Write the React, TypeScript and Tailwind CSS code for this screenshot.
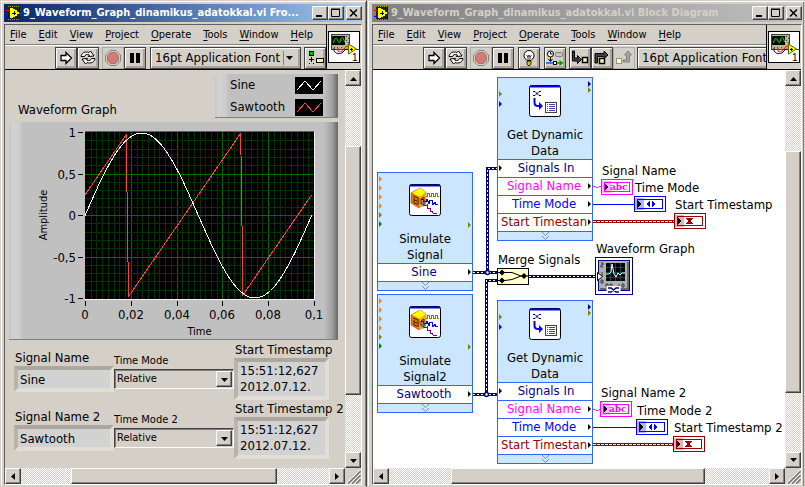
import React from 'react';
import clsx from 'clsx';

type PortColor = 'black' | 'navy' | 'blue' | 'olive' | 'orange' | 'green';

interface PortSpec {
  x: number;
  y: number;
  color: PortColor;
}

interface NodeRow {
  label: string;
  className: string;
}

const PORT_FILL: Record<PortColor, string> = {
  black: '#000000',
  navy: '#000080',
  blue: '#0000ff',
  olive: '#808000',
  orange: '#ff8000',
  green: '#008000',
};

const MENUS = ['File', 'Edit', 'View', 'Project', 'Operate', 'Tools', 'Window', 'Help'];

const RAISED = 'border border-t-white border-l-white border-b-[#404040] border-r-[#404040] bg-[#d4d0c8] shadow-[inset_-1px_-1px_0_#808080]';
const TRACK = 'bg-[repeating-conic-gradient(#ffffff_0_25%,#d4d0c8_0_50%)] bg-size-[2px_2px]';

/* ---------- icons ---------- */

function LabViewIcon() {
  return (
    <svg width="16" height="14" viewBox="0 0 16 14" shapeRendering="crispEdges" aria-hidden="true" className="shrink-0">
      <rect x="2" y="0" width="12" height="14" fill="#202010" />
      <path d="M2 .5h12M2 13.500h12" stroke="#a0a000" strokeDasharray="1 1" />
      <path d="M4 2h3v1h2v1h2v2h2v2h-2v2H9v1H7v1H4z" fill="#ffff00" />
      <path d="M6 7.500h4M8.500 5v4" stroke="#000" />
      <path d="M0 4.500h4M13 7.500h3" stroke="#ff0000" />
      <path d="M0 10.500h4" stroke="#0000ff" />
    </svg>
  );
}

function ViIcon() {
  return (
    <svg width="32" height="32" viewBox="0 0 32 32" aria-hidden="true">
      <rect x="0.5" y="0.5" width="31" height="31" fill="#fff" stroke="#000" />
      <g shapeRendering="crispEdges">
        <rect x="3.500" y="3.500" width="18" height="15" fill="#b8b890" stroke="#404030" />
        <rect x="4" y="5" width="13" height="9" fill="#000" />
        <path d="M18 5h1v1h-1zM20 7h1v1h-1zM18 9h1v1h-1zM20 11h1v1h-1zM6 16h1v1h-1zM9 16h1v1h-1zM13 16h1v1h-1z" fill="#404040" />
      </g>
      <path d="M6 17v3c3 4 8 3 10 0s3-1 5-1" fill="none" stroke="#000080" />
      <path d="M10 17v3c2 2 5 0 6-2s3-3 5-3" fill="none" stroke="#ff0000" />
      <path d="M5.500 12c1-5 3-6 4-3s2 4 3 0 3-3 4 2" fill="none" stroke="#00ff00" />
      <path d="M20.500 13v10l8-5z" fill="#ffff00" stroke="#606000" />
      <g shapeRendering="crispEdges">
        <path d="M22 18.500h3M23.500 17v3" stroke="#000" />
        <path d="M28 18.500h3" stroke="#ff0000" />
      </g>
      <text x="24" y="30" fontSize="10" fontFamily="Liberation Sans" fill="#000">1</text>
    </svg>
  );
}

function RunIcon() {
  return (
    <svg width="14" height="14" viewBox="0 0 14 14" aria-hidden="true">
      <path d="M2 4.500h5v-3l5.500 5.500-5.500 5.500v-3h-5z" fill="#fff" stroke="#000" strokeWidth="1.300" />
    </svg>
  );
}

function RunContinuousIcon() {
  return (
    <svg width="16" height="15" viewBox="0 0 16 15" aria-hidden="true" fill="#fff" stroke="#000">
      <path d="M1 6.500C1.500 3 5 1 9 2.500L10.500 1l3.500 5-5.500.500 1-1.500C7 4 5 4.500 4.500 6.500z" />
      <path d="M15 8.500c-.500 3.500-4 5.500-8 4L5.500 14 2 9l5.500-.500-1 1.500c2.500 1 4.500.500 5-1.500z" />
    </svg>
  );
}

function AbortIcon() {
  return (
    <svg width="16" height="16" viewBox="0 0 16 16" aria-hidden="true">
      <path d="M5 .5h6L15.500 5v6L11 15.500H5L.5 11V5z" fill="#d4d0c8" stroke="#808080" />
      <path d="M5.500 2.500h5l3 3v5l-3 3h-5l-3-3v-5z" fill="#d87870" stroke="#808080" />
    </svg>
  );
}

function PauseIcon() {
  return (
    <svg width="12" height="12" viewBox="0 0 12 12" aria-hidden="true">
      <path d="M1 1h4v10H1zM7 1h4v10H7z" />
    </svg>
  );
}

function BulbIcon() {
  return (
    <svg width="14" height="16" viewBox="0 0 14 16" aria-hidden="true">
      <path d="M5 10.500C3 8.500 2 7.500 2 5.500a5 5 0 0 1 10 0c0 2-1 3-3 5z" fill="#fff" stroke="#000" />
      <path d="M4.500 5l1.500 2 1-2 1 2 1.500-2M6 7v4M8 7v4" fill="none" stroke="#000" strokeWidth=".8" />
      <path d="M5 11h4v3l-1 1.500H6L5 14z" fill="#e0c000" stroke="#000" strokeWidth=".8" />
    </svg>
  );
}

function RetainIcon() {
  return (
    <svg width="18" height="16" viewBox="0 0 18 16" aria-hidden="true">
      <circle cx="4.500" cy="4" r="3" fill="#fff" stroke="#000" />
      <path d="M4.500 2v2h2" fill="none" stroke="#000" />
      <rect x="9.500" y="2.500" width="7" height="4" rx="1" fill="#c8c4bc" stroke="#808080" />
      <path d="M4.500 7v4M2.500 9l2 2.500 2-2.500" fill="none" stroke="#000" />
      <path d="M0 13h8" stroke="#0060ff" strokeWidth="1.500" />
      <rect x="7.500" y="11.500" width="3" height="3" fill="#fff" stroke="#000" />
      <path d="M11 13h3" stroke="#00a000" strokeWidth="1.500" />
      <path d="M13.500 10v6l4-3z" fill="#00a000" />
    </svg>
  );
}

function StepIntoIcon() {
  return (
    <svg width="18" height="16" viewBox="0 0 18 16" aria-hidden="true">
      <path d="M1.500 1h2v7h3V5.500l4 4-4 4V11h-5z" fill="#404040" stroke="#000" />
      <rect x="11.500" y="7.500" width="5" height="5" fill="#ffffa0" stroke="#000" strokeWidth="1.500" />
    </svg>
  );
}

function StepOverIcon() {
  return (
    <svg width="18" height="16" viewBox="0 0 18 16" aria-hidden="true">
      <path d="M2 13V3.500h9V1l4 4-4 4V6.500H4.500V13z" fill="#404040" stroke="#000" />
      <rect x="6.500" y="8.500" width="5" height="5" fill="#ffffa0" stroke="#000" strokeWidth="1.500" />
    </svg>
  );
}

function StepOutIcon() {
  return (
    <svg width="18" height="16" viewBox="0 0 18 16" aria-hidden="true">
      <path d="M8 12V10h3.500V5H9.500l3.500-4 3.500 4H14.500v7z" fill="#a8a49c" stroke="#808080" />
      <rect x="1.500" y="8.500" width="5" height="5" fill="#ffffc8" stroke="#909090" />
    </svg>
  );
}

function AlignIcon() {
  return (
    <svg width="18" height="16" viewBox="0 0 18 16" shapeRendering="crispEdges" aria-hidden="true">
      <rect x="3.500" y="1.500" width="4" height="4" fill="#00c000" stroke="#000" />
      <path d="M3 9.500h5M5.500 7v5M3 13.500h1M7 13.500h1" stroke="#000" />
      <rect x="10.500" y="8.500" width="7" height="4" fill="#ffff80" stroke="#000" />
    </svg>
  );
}

function Arrow({ dir }: { dir: 'up' | 'down' | 'left' | 'right' }) {
  const paths = {
    up: 'M0 6h7L3.500 2z',
    down: 'M0 2h7L3.500 6z',
    left: 'M5 0v7L1 3.500z',
    right: 'M2 0v7L6 3.500z',
  };
  return (
    <svg width="7" height="7" viewBox="0 0 7 7" aria-hidden="true">
      <path d={paths[dir]} />
    </svg>
  );
}

function SimulateIcon() {
  return (
    <svg width="32" height="32" viewBox="0 0 32 32" aria-hidden="true">
      <rect x=".5" y=".5" width="31" height="31" rx="2" fill="#fff" stroke="#000" />
      <path d="M1 1.500h30" stroke="#0000c0" strokeWidth="2" />
      <path d="M2 9l9-5 6 4v11l-7 5-8-5z" fill="#e87800" stroke="#804000" strokeWidth=".5" />
      <path d="M3 9l8-5 6 4-6 5z" fill="#ffff00" />
      <path d="M11 13l6-5v11l-7 5z" fill="#f8a030" />
      <path d="M4 12l5 2v7M5 14v5l3 1M5 16l3 1M12 15l3-2v5l-3 2z" fill="none" stroke="#402000" />
      <path d="M12 18l4-1 1 3-3 3z" fill="#707070" />
      <g shapeRendering="crispEdges" fill="none">
        <path d="M17 12.500h1.500V9.500h2v3h2v-3h2v3h2v-3h2v3h1.500" stroke="#808000" />
        <path d="M12 15.500h2l1 2h2l1-2 2 4 1-3h2l1 4 2-2 1 2h2" stroke="#0000ff" />
        <path d="M14 20l2 2 2-1v3h3v3h2l1 2h4" stroke="#800080" />
      </g>
    </svg>
  );
}

function DynamicDataIcon() {
  return (
    <svg width="32" height="32" viewBox="0 0 32 32" aria-hidden="true">
      <rect x=".5" y=".5" width="31" height="31" rx="2" fill="#fff" stroke="#000" />
      <path d="M1 1.500h30" stroke="#0000e0" strokeWidth="2" />
      <path d="M4 6.500h2l4 4h2M4 10.500h2l4-4h2" fill="none" stroke="#000060" />
      <path d="M5.500 13v4.500q0 3.500 3.500 3.500h2" fill="none" stroke="#0000ff" strokeWidth="2" />
      <path d="M10 17v8l4-4z" fill="#0000ff" />
      <rect x="16.500" y="17.500" width="11" height="10" fill="#fff" stroke="#404040" />
      <path d="M18 19.500h1M20 19.500h6M18 21.500h1M20 21.500h6M18 23.500h1M20 23.500h6M18 25.500h1M20 25.500h6" stroke="#4040c0" />
    </svg>
  );
}

function GraphTerminalIcon() {
  return (
    <svg width="38" height="38" viewBox="0 0 38 38" aria-hidden="true">
      <rect x=".5" y=".5" width="37" height="37" fill="#fff" stroke="#000080" />
      <rect x="3.500" y="3.500" width="31" height="30" fill="#b0b0b0" stroke="#000080" />
      <path d="M33 5v27H5" fill="none" stroke="#686868" strokeWidth="2" />
      <rect x="11" y="6" width="19" height="18" fill="#000" />
      <path d="M15.500 6v18M20.500 6v18M25.500 6v18M11 10.500h19M11 15.500h19M11 20.500h19" stroke="#007070" strokeWidth=".7" />
      <path d="M11 17h3l2-2 1-8 2 10 2 3 2-4 2 2 2-2h3" fill="none" stroke="#fff" />
      <path d="M6 6h2v2H6v2h2M7 15v4M6 23h2v3H6zM11 27h2v3h-2zM15 27h2v3h-2zM24 27v3M27 27h2v3h-2z" fill="none" stroke="#202020" strokeWidth=".8" />
      <path d="M2.500 15.500v8l5-4z" fill="#fff" stroke="#000" />
      <rect x="11.500" y="29" width="14" height="8" fill="#fff" />
      <path d="M13 31h3l5 4h3M13 35h3l5-4h3" fill="none" stroke="#000080" strokeWidth="1.500" />
    </svg>
  );
}

/* ---------- window chrome ---------- */

function ToolButton({ label, disabled, children }: { label: string; disabled?: boolean; children: React.ReactNode }) {
  return (
    <button
      type="button"
      aria-label={label}
      disabled={disabled}
      className={clsx(
        'flex h-[22px] w-[22px] shrink-0 items-center justify-center border',
        disabled
          ? 'border-[#b0aca4]'
          : 'border-[#404040] shadow-[inset_1px_1px_0_#ffffff,inset_-2px_-2px_0_#a8a49c]',
      )}
    >
      {children}
    </button>
  );
}

function FontSelect() {
  return (
    <div className="relative h-[22px] w-[151px] shrink-0">
      <select
        aria-label="Text settings"
        className="h-full w-full appearance-none border border-[#404040] bg-[#d4d0c8] pl-1 text-[13px] leading-4 shadow-[inset_1px_1px_0_#ffffff,inset_-2px_-2px_0_#a8a49c]"
      >
        <option>16pt Application Font</option>
      </select>
      <span className="pointer-events-none absolute top-1 right-2 flex h-[14px] items-center border-l border-[#808080] pl-[2px]">
        <Arrow dir="down" />
      </span>
    </div>
  );
}

function CaptionButton({ kind }: { kind: 'Minimize' | 'Maximize' | 'Close' }) {
  return (
    <button type="button" aria-label={kind} className={clsx('flex h-[14px] w-4 items-center justify-center', RAISED)}>
      <svg width="12" height="10" viewBox="0 0 12 10" fill="none" stroke="#000" aria-hidden="true">
        {kind === 'Minimize' && <path d="M2 8h6" strokeWidth="2" />}
        {kind === 'Maximize' && <path d="M1.500 1.500h8v7h-8zM1 1h9" />}
        {kind === 'Close' && <path d="M2 1.500l7 7M9 1.500l-7 7" strokeWidth="1.500" />}
      </svg>
    </button>
  );
}

interface WindowProps {
  className: string;
  title: string;
  active?: boolean;
  tools: React.ReactNode;
  vThumb: React.ReactNode;
  hThumb: React.ReactNode;
  children: React.ReactNode;
}

function Window({ className, title, active, tools, vThumb, hThumb, children }: WindowProps) {
  return (
    <section
      className={clsx(
        'flex min-w-0 flex-col border border-t-[#d4d0c8] border-b-[#d4d0c8] border-l-[#d4d0c8] bg-[#d4d0c8] pt-[2px] pb-px shadow-[inset_1px_1px_0_#ffffff,inset_-1px_0_0_#808080]',
        className,
      )}
    >
      <header
        className={clsx(
          'mt-px mb-[2px] flex h-[18px] items-center pl-[2px]',
          active
            ? 'bg-linear-to-r from-[#0a246a] to-[#a6caf0] text-white'
            : 'bg-linear-to-r from-[#808080] to-[#c0c0c0] text-[#d4d0c8]',
        )}
      >
        <LabViewIcon />
        <h1 className="min-w-0 flex-1 pl-px text-[11px] leading-4 font-bold whitespace-nowrap">{title}</h1>
        <div className="flex shrink-0">
          <CaptionButton kind="Minimize" />
          <CaptionButton kind="Maximize" />
          <span className="w-[2px]" />
          <CaptionButton kind="Close" />
        </div>
      </header>

      <div className="flex min-h-0 flex-1 flex-col border border-t-[#606060] border-r-white border-b-white border-l-[#606060]">
        <div className="flex h-[45px] shrink-0 border-b border-black">
          <div className="min-w-0 flex-1 overflow-hidden">
            <nav className="flex h-5 items-center gap-3 border-b border-[#808080] pl-[5px] text-[11px] leading-4">
              {MENUS.map((menu) => (
                <button key={menu} type="button">
                  <span className="underline underline-offset-2">{menu[0]}</span>
                  {menu.slice(1)}
                </button>
              ))}
            </nav>
            <div className="flex h-6 items-center border-t border-white pl-[50px]">{tools}</div>
          </div>
          <div className="flex w-[35px] shrink-0 items-center border-l border-black pl-px">
            <ViIcon />
          </div>
        </div>

        <div className="flex min-h-0 flex-1">
          <div className="min-w-0 flex-1">{children}</div>
          <div className={clsx('flex w-4 shrink-0 flex-col', TRACK)}>
            <button type="button" aria-label="Scroll up" className={clsx('flex h-4 shrink-0 items-center justify-center', RAISED)}>
              <Arrow dir="up" />
            </button>
            {vThumb}
            <button type="button" aria-label="Scroll down" className={clsx('flex h-4 shrink-0 items-center justify-center', RAISED)}>
              <Arrow dir="down" />
            </button>
          </div>
        </div>

        <div className="flex h-4 shrink-0">
          <div className={clsx('flex min-w-0 flex-1', TRACK)}>
            <button type="button" aria-label="Scroll left" className={clsx('flex w-4 shrink-0 items-center justify-center', RAISED)}>
              <Arrow dir="left" />
            </button>
            {hThumb}
            <button type="button" aria-label="Scroll right" className={clsx('flex w-4 shrink-0 items-center justify-center', RAISED)}>
              <Arrow dir="right" />
            </button>
          </div>
          <svg width="16" height="16" viewBox="0 0 16 16" className="shrink-0" aria-hidden="true">
            <path d="M3 15.500L15.500 3M7 15.500L15.500 7M11 15.500l4.500-4.500" stroke="#808080" strokeWidth="2" />
            <path d="M1.500 15.500l14-14M5.500 15.500l10-10M9.500 15.500l6-6" stroke="#fff" />
          </svg>
        </div>
      </div>
    </section>
  );
}

function RunTools() {
  return (
    <>
      <ToolButton label="Run"><RunIcon /></ToolButton>
      <ToolButton label="Run continuously"><RunContinuousIcon /></ToolButton>
      <span className="w-[3px] shrink-0" />
      <ToolButton label="Abort" disabled><AbortIcon /></ToolButton>
      <ToolButton label="Pause"><PauseIcon /></ToolButton>
    </>
  );
}

/* ---------- front panel ---------- */

const PANEL_FILL =
  'bg-[linear-gradient(to_right,#c8c8c8_0,#d2d2d2_4px,#cecece_10px,#c0c0c0_14px,#c0c0c0_calc(100%-14px),#a0a0a0_calc(100%-6px),#686868_100%)] border-b border-[#808080]';

const PLOT = { x: 76, y: 10, w: 229, h: 167 };
const X_TICKS = ['0', '0,02', '0,04', '0,06', '0,08', '0,1'];
const Y_TICKS = ['1', '0,5', '0', '-0,5', '-1'];

function toPoints(fn: (n: number) => number) {
  return Array.from({ length: 100 }, (_, n) => {
    const px = PLOT.x + (n / 100) * PLOT.w;
    const py = PLOT.y + PLOT.h / 2 - fn(n) * (PLOT.h / 2 - 1);
    return `${px.toFixed(1)},${py.toFixed(1)}`;
  }).join(' ');
}

const SINE = toPoints((n) => Math.sin((2 * Math.PI * n) / 99));
const SAWTOOTH = toPoints((n) => ((0.625 + (2 * n) / 99) % 1) * 2 - 1);

function WaveformGraph() {
  const { x, y, w, h } = PLOT;
  return (
    <svg width="329" height="217" viewBox="0 0 329 217" role="img" aria-label="Waveform Graph">
      <rect x={x} y={y} width={w} height={h} fill="#000" />
      <g shapeRendering="crispEdges">
        {Array.from({ length: 39 }, (_, i) => i + 1).map((i) => {
          const gx = Math.round(x + (i * w) / 40) + 0.5;
          return <path key={i} d={`M${gx} ${y}v${h}`} stroke={i % 8 === 0 ? '#006c00' : '#003400'} />;
        })}
        {Array.from({ length: 19 }, (_, i) => i + 1).map((i) => {
          const gy = Math.round(y + (i * (h - 1)) / 20) + 0.5;
          return <path key={i} d={`M${x} ${gy}h${w}`} stroke={i % 5 === 0 ? '#006c00' : '#003400'} />;
        })}
        <path d={`M${x} ${y - 0.5}h${w}`} stroke="#606060" />
        <path d={`M${x} ${y + h + 0.5}h${w + 0.5}V${y}`} fill="none" stroke="#f0f0f0" />
        <polyline points={SAWTOOTH} fill="none" stroke="#ff4040" />
        <polyline points={SINE} fill="none" stroke="#fff" />
      </g>
      <g fontSize="13" fill="#000">
        {Y_TICKS.map((t, i) => {
          const ty = Math.round(y + (i * (h - 1)) / 4);
          return (
            <g key={t}>
              <path d={`M${x - 7} ${ty + 0.5}h5`} stroke="#000" />
              <text x={x - 9} y={ty + 5} textAnchor="end">{t}</text>
            </g>
          );
        })}
        {X_TICKS.map((t, i) => {
          const tx = Math.round(x + (i * w) / 5);
          return (
            <g key={t}>
              <path d={`M${tx + 0.5} ${y + h + 2}v5`} stroke="#000" />
              <text x={tx} y={y + h + 20} textAnchor="middle">{t}</text>
            </g>
          );
        })}
      </g>
      <text x={x + w / 2} y="213" fontSize="11" textAnchor="middle">Time</text>
      <text transform="translate(38 93) rotate(-90)" fontSize="11" textAnchor="middle">Amplitude</text>
    </svg>
  );
}

function LegendItem({ label, color }: { label: string; color: string }) {
  return (
    <li className="flex h-[22px] items-center justify-between pr-[15px] pl-[15px]">
      {label}
      <svg width="28" height="17" viewBox="0 0 28 17" shapeRendering="crispEdges" aria-hidden="true">
        <rect width="28" height="17" fill="#000" />
        <path d="M2 13l8-9 8 9 8-9" fill="none" stroke={color} />
      </svg>
    </li>
  );
}

interface SignalControlsProps {
  suffix: string;
  name: string;
}

const SUNKEN =
  'border-4 border-t-[#aca8a0] border-l-[#b8b4ac] border-r-[#e2ded6] border-b-[#e2ded6] bg-[#d2d2d2]';

function SignalControls({ suffix, name }: SignalControlsProps) {
  const nameId = `signal-name${suffix.trim()}`;
  const modeId = `time-mode${suffix.trim()}`;
  return (
    <div className="mb-px flex items-center">
      <div className="flex w-[100px] flex-col">
        <label htmlFor={nameId} className="pl-px leading-4 whitespace-nowrap">{`Signal Name${suffix}`}</label>
        <input id={nameId} defaultValue={name} readOnly className={clsx('h-[26px] w-full pl-[2px] leading-4', SUNKEN)} />
      </div>
      <div className="flex w-[120px] flex-col text-[11px]">
        <label htmlFor={modeId} className="leading-4">{`Time Mode${suffix}`}</label>
        <div className="relative h-5">
          <select
            id={modeId}
            className="h-5 w-full appearance-none border border-t-[#404040] border-r-white border-b-white border-l-[#404040] bg-[#d4d0c8] pl-[2px] leading-4 shadow-[inset_1px_1px_0_#808080]"
          >
            <option>Relative</option>
            <option>Absolute</option>
          </select>
          <span className={clsx('pointer-events-none absolute top-[2px] right-[2px] flex h-4 w-4 items-center justify-center', RAISED)}>
            <Arrow dir="down" />
          </span>
        </div>
      </div>
      <div className="flex flex-col">
        <h2 className="pl-px leading-4 whitespace-nowrap">{`Start Timestamp${suffix}`}</h2>
        <div className={clsx('h-[42px] w-[95px] pt-px pl-[2px] leading-4', SUNKEN)}>
          15:51:12,627
          <br />
          2012.07.12.
        </div>
      </div>
    </div>
  );
}

function FrontPanel() {
  return (
    <div className="flex w-[340px] flex-col pt-1 pl-1">
      <div className="flex items-end justify-between pr-[7px]">
        <h2 className="pl-[9px] leading-4">Waveform Graph</h2>
        <ul className={clsx('h-[44px] w-[123px]', PANEL_FILL)}>
          <LegendItem label="Sine" color="#ffffff" />
          <LegendItem label="Sawtooth" color="#ff4040" />
        </ul>
      </div>
      <div className={clsx('mt-1 mb-[2px] w-[329px]', PANEL_FILL)}>
        <WaveformGraph />
      </div>
      <div className="pl-[5px]">
        <SignalControls suffix="" name="Sine" />
        <SignalControls suffix=" 2" name="Sawtooth" />
      </div>
    </div>
  );
}

/* ---------- block diagram ---------- */

function Ports({ ports, height }: { ports: PortSpec[]; height: number }) {
  return (
    <svg width="94" height={height} className="absolute top-0 left-0" aria-hidden="true">
      {ports.map((p) => (
        <path key={`${p.x}-${p.y}`} d={`M${p.x} ${p.y - 3}v6l3-3z`} fill={PORT_FILL[p.color]} />
      ))}
    </svg>
  );
}

interface ExpressNodeProps {
  className: string;
  headClassName: string;
  icon: React.ReactNode;
  name: [string, string];
  rows: NodeRow[];
  ports: PortSpec[];
  height: number;
}

function ExpressNode({ className, headClassName, icon, name, rows, ports, height }: ExpressNodeProps) {
  return (
    <div className={clsx('absolute w-24 border border-[#3366ff] bg-[#cce6ff]', className)}>
      <div className={clsx('flex flex-col items-center text-center leading-4', headClassName)}>
        {icon}
        <div>
          {name[0]}
          <br />
          {name[1]}
        </div>
      </div>
      {rows.map((row) => (
        <div
          key={row.label}
          className={clsx('h-[18px] border-t border-[#3366ff] bg-white leading-4 whitespace-nowrap', row.className)}
        >
          {row.label}
        </div>
      ))}
      <div className="flex h-[9px] items-center justify-center border-t border-[#3366ff]">
        <svg width="9" height="8" viewBox="0 0 9 8" fill="none" stroke="#8090a0" aria-hidden="true">
          <path d="M1 0l3.500 3.500L8 0M1 4l3.500 3.500L8 4" />
        </svg>
      </div>
      <Ports ports={ports} height={height} />
    </div>
  );
}

const SIMULATE_PORTS: PortSpec[] = [
  { x: 1, y: 6, color: 'orange' },
  { x: 1, y: 15, color: 'orange' },
  { x: 1, y: 24, color: 'orange' },
  { x: 1, y: 33, color: 'orange' },
  { x: 1, y: 42, color: 'olive' },
  { x: 1, y: 51, color: 'green' },
  { x: 90, y: 52, color: 'olive' },
  { x: 90, y: 99, color: 'black' },
];

const DYNAMIC_PORTS: PortSpec[] = [
  { x: 1, y: 16, color: 'olive' },
  { x: 1, y: 26, color: 'blue' },
  { x: 90, y: 6, color: 'navy' },
  { x: 90, y: 12, color: 'olive' },
  { x: 1, y: 90, color: 'black' },
  { x: 90, y: 108, color: 'black' },
  { x: 90, y: 126, color: 'black' },
  { x: 90, y: 144, color: 'black' },
];

const DYNAMIC_ROWS: NodeRow[] = [
  { label: 'Signals In', className: 'pl-[2px] text-center text-[#000080]' },
  { label: 'Signal Name', className: 'pr-[2px] text-center text-[#ff00ff]' },
  { label: 'Time Mode', className: 'pr-[2px] text-center text-[#0000ff]' },
  { label: 'Start Timestan', className: 'pl-[3px] text-[#990000]' },
];

function SimulateSignal({ className, name, output }: { className: string; name: string; output: string }) {
  return (
    <ExpressNode
      className={className}
      headClassName="gap-[15px] pt-[11px]"
      icon={<SimulateIcon />}
      name={['Simulate', name]}
      rows={[{ label: output, className: 'pr-[2px] text-center text-[#000080]' }]}
      ports={SIMULATE_PORTS}
      height={116}
    />
  );
}

function GetDynamicData({ className }: { className: string }) {
  return (
    <ExpressNode
      className={className}
      headClassName="gap-[10px] pt-[7px]"
      icon={<DynamicDataIcon />}
      name={['Get Dynamic', 'Data']}
      rows={DYNAMIC_ROWS}
      ports={DYNAMIC_PORTS}
      height={161}
    />
  );
}

interface TerminalProps {
  className: string;
  label: string;
  kind: 'string' | 'ring' | 'timestamp';
}

const TERMINAL_COLOR = { string: '#ff00ff', ring: '#0000ff', timestamp: '#990000' };

function Terminal({ className, label, kind }: TerminalProps) {
  const color = TERMINAL_COLOR[kind];
  return (
    <div className={clsx('absolute', className)}>
      <div className="pl-px leading-4 whitespace-nowrap">{label}</div>
      <svg width="32" height="16" viewBox="0 0 32 16" shapeRendering="crispEdges" aria-hidden="true">
        <rect x=".5" y=".5" width="31" height="15" fill="#fff" stroke={color} />
        <rect x="3.500" y="3.500" width="25" height="9" fill="#fff" stroke={color} />
        <rect x="1" y="2" width="9" height="12" fill={color} fillOpacity=".3" />
        <path d="M4 5v6l4-3z" fill="#000" />
        {kind === 'string' && (
          <text x="9" y="11" fontSize="9" fontWeight="700" fontFamily="DejaVu Serif" fill={color}>abc</text>
        )}
        {kind === 'ring' && <path d="M16 5v6l-4-3zM18 5v6l4-3z" fill={color} />}
        {kind === 'timestamp' && (
          <path d="M12 5h7v1h-1v1h-1v2h1v1h1v1h-7v-1h1V9h1V7h-1V6h-1z" fill={color} />
        )}
      </svg>
    </div>
  );
}

function Wires() {
  const dynamic = [
    'M100 202.500h24M114.500 202V98.500H124',
    'M100 324.500h24M113.500 324V210.500H124',
    'M156 206.500h66',
  ];
  const junctions = [[114.5, 202.5], [113.5, 324.5]];
  const timestamps = ['M220 151.500h81', 'M220 374.500h80'];
  return (
    <svg width="412" height="398" className="absolute top-0 left-0" fill="none" aria-hidden="true">
      <g shapeRendering="crispEdges">
        {dynamic.map((d) => (
          <g key={d}>
            <path d={d} stroke="#000080" strokeWidth="3" />
            <path d={d} stroke="#fff" strokeDasharray="2 2" />
          </g>
        ))}
        {timestamps.map((d) => (
          <g key={d}>
            <path d={d} stroke="#990000" strokeWidth="3" />
            <path d={d} stroke="#fff" strokeDasharray="3 1" />
          </g>
        ))}
        <path d="M220 134.500h41M220 357.500h43" stroke="#0000ff" />
      </g>
      {junctions.map(([cx, cy]) => (
        <circle key={cy} cx={cx} cy={cy} r="2" fill="#fff" stroke="#000080" strokeWidth="1.500" />
      ))}
      <path d="M220 116.500h2l1 1h2l1-1h2M220 339.500h2l1 1h2l1-1h2" stroke="#ff00ff" />
    </svg>
  );
}

function BlockDiagram() {
  return (
    <div className="relative h-full min-h-[398px] overflow-hidden bg-white">
      <Wires />
      <SimulateSignal className="top-[102px] left-1" name="Signal" output="Sine" />
      <SimulateSignal className="top-[224px] left-1" name="Signal2" output="Sawtooth" />
      <GetDynamicData className="top-[7px] left-[124px]" />
      <GetDynamicData className="top-[230px] left-[124px]" />

      <div className="absolute top-[182px] left-[124px]">
        <div className="pl-px leading-4 whitespace-nowrap">Merge Signals</div>
        <svg width="32" height="17" viewBox="0 0 32 17" aria-hidden="true">
          <rect x=".5" y=".5" width="31" height="16" fill="#ffffcc" stroke="#000" />
          <path d="M0 4.500h15l9 3.500h8M0 12.500h8l7-1 9-3.500" fill="none" stroke="#000" />
          <path d="M2 4.500l3-3 3 3-3 3zM2 12.500l3-3 3 3-3 3zM24 8l3-3 3 3-3 3z" />
        </svg>
      </div>

      <div className="absolute top-[171px] left-[222px]">
        <div className="pl-px leading-4 whitespace-nowrap">Waveform Graph</div>
        <GraphTerminalIcon />
      </div>

      <Terminal className="top-[93px] left-[228px]" label="Signal Name" kind="string" />
      <Terminal className="top-[110px] left-[261px]" label="Time Mode" kind="ring" />
      <Terminal className="top-[127px] left-[301px]" label="Start Timestamp" kind="timestamp" />
      <Terminal className="top-[315px] left-[227px]" label="Signal Name 2" kind="string" />
      <Terminal className="top-[333px] left-[263px]" label="Time Mode 2" kind="ring" />
      <Terminal className="top-[350px] left-[300px]" label="Start Timestamp 2" kind="timestamp" />
    </div>
  );
}

export default function App() {
  return (
    <main className="grid min-h-screen grid-cols-[367fr_438fr] bg-[#d4d0c8] font-['DejaVu_Sans_Condensed','DejaVu_Sans',sans-serif] text-[13px] text-black">
      <Window
        active
        className="border-r-[#404040] pr-1 pl-[3px]"
        title="9_Waveform_Graph_dinamikus_adatokkal.vi Fro..."
        tools={
          <>
            <RunTools />
            <span className="w-1 shrink-0" />
            <FontSelect />
            <span className="w-[3px] shrink-0" />
            <ToolButton label="Align objects"><AlignIcon /></ToolButton>
          </>
        }
        vThumb={
          <>
            <span className="flex-[60]" />
            <span className={clsx('flex-[249]', RAISED)} />
            <span className="flex-[57]" />
          </>
        }
        hThumb={
          <>
            <span className="flex-[50]" />
            <span className={clsx('flex-[206]', RAISED)} />
            <span className="flex-[52]" />
          </>
        }
      >
        <FrontPanel />
      </Window>

      <Window
        className="border-r-[#d4d0c8] pr-[2px] pl-1"
        title="9_Waveform_Graph_dinamikus_adatokkal.vi Block Diagram"
        tools={
          <>
            <RunTools />
            <span className="w-1 shrink-0" />
            <ToolButton label="Highlight execution"><BulbIcon /></ToolButton>
            <span className="w-1 shrink-0" />
            <ToolButton label="Retain wire values"><RetainIcon /></ToolButton>
            <span className="w-[3px] shrink-0" />
            <ToolButton label="Step into"><StepIntoIcon /></ToolButton>
            <ToolButton label="Step over"><StepOverIcon /></ToolButton>
            <ToolButton label="Step out" disabled><StepOutIcon /></ToolButton>
            <span className="w-[2px] shrink-0" />
            <FontSelect />
          </>
        }
        vThumb={
          <>
            <span className="flex-[65]" />
            <span className={clsx('flex-[242]', RAISED)} />
            <span className="flex-[59]" />
          </>
        }
        hThumb={
          <>
            <span className="flex-[62]" />
            <span className={clsx('flex-[254]', RAISED)} />
            <span className="flex-[64]" />
          </>
        }
      >
        <BlockDiagram />
      </Window>
    </main>
  );
}
